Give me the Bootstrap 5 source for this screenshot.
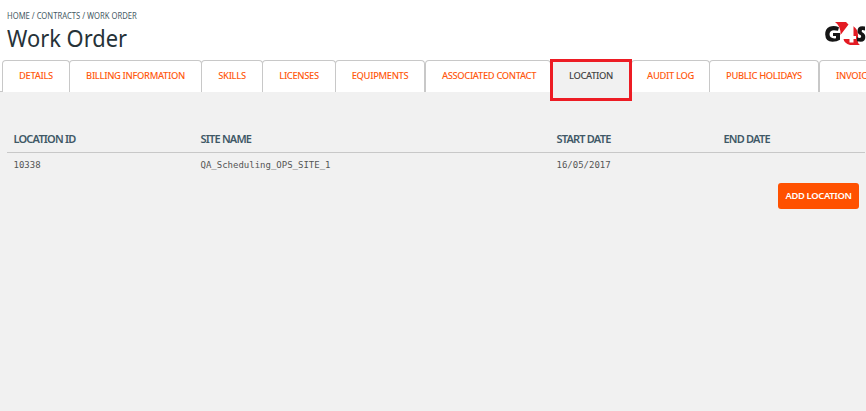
<!DOCTYPE html>
<html lang="en">
<head>
<meta charset="utf-8">
<title>Work Order</title>
<link href="https://cdn.jsdelivr.net/npm/bootstrap@5.3.0/dist/css/bootstrap.min.css" rel="stylesheet">
<style>
body{font-family:"Noto Sans","Open Sans",sans-serif;background:#f1f1f1;height:411px;overflow:hidden;color:#444}
.page-head{height:60px;padding:10px 0 0 7px}
.trail{font-size:8.8px;line-height:13px;color:#455a64;white-space:pre}
.trail span{display:inline-block;transform-origin:0 50%;transform:scaleX(.87)}
.page-title{font-size:24px;line-height:30px;color:#263238;font-weight:400;transform-origin:0 50%;transform:scaleX(.912)}
.logo{width:42px;height:26px;margin:11px 0 0 0}
.tabs{height:32px;padding-left:2px;--bs-nav-tabs-border-width:0px;border:0;background:#fff linear-gradient(#c8c8c8,#c8c8c8) 0 31px/2px 1px no-repeat}
.tabs .nav-item{flex:none;margin-right:-1px}
.tabs .nav-link{margin:0;height:32px;padding:0;border:1px solid #c8c8c8;border-bottom:0;border-radius:4px 4px 0 0;background:#fff;color:#ff5a0f;font-size:9.4px;font-weight:500;letter-spacing:-.35px;line-height:30px;text-align:center;white-space:nowrap;width:100%}
.tabs .nav-link.active{height:42px;margin-top:-1px;border:3px solid #ed1c24;border-radius:0;background:#f1f1f1;color:#444;line-height:28px;position:relative;z-index:2}
.w-a{width:68px}.w-b{width:133px}.w-c{width:62px}.w-d{width:74px}.w-e{width:90px}.w-f{width:126px}.w-g{width:82px}.w-h{width:79px}.w-i{width:110px}.w-j{width:86px}
.tabs .w-f .nav-link{padding-left:2px}
.tabs .gap-fix{margin-right:0}
.tabs .nav-link.cut{text-align:left;padding-left:16px}
.records{margin:36px 1px 0 7px;width:858px;table-layout:fixed;--bs-table-bg:transparent}
.records th{font-size:11px;line-height:16px;font-weight:600;letter-spacing:-.8px;color:#3f5866;padding:3px 0 5px 6.5px;border-bottom:1px solid #c8c8c8}
.records td{font-family:"DejaVu Sans Mono","Liberation Mono",monospace;font-size:9px;line-height:14px;color:#555;padding:5px 0 5px 6.5px;border:0}
.c1{width:187px}.c2{width:356px}.c3{width:167px}
.add{width:81px;height:26px;padding:0;margin:6px 7px 0 0;border:0;border-radius:3px;background:#ff5100;color:#fff;font-size:9.4px;font-weight:600;letter-spacing:-.32px;line-height:26px}
</style>
<script src="https://cdn.jsdelivr.net/npm/bootstrap@5.3.0/dist/js/bootstrap.bundle.min.js"></script>
</head>
<body>
<header class="page-head bg-white d-flex justify-content-between">
  <div>
    <div class="trail"><span>HOME / CONTRACTS / WORK ORDER</span></div>
    <h1 class="page-title m-0">Work Order</h1>
  </div>
  <svg class="logo" viewBox="0 0 42 26" aria-label="G4S">
    <path d="M11 1H22L24.5 3.5L16.5 14Q17 5 11 1Z" fill="#e31b23"/>
    <path d="M29 5Q34 8 34 14V18Q33 22 36 24H26Q20 22 19.5 18H29Z" fill="#e31b23"/>
    <path d="M15 6.2Q10 4 5.5 5.8Q1 8 1.2 13.5Q1.5 20.8 8.5 20.8Q13 20.8 16 18.8V12H9V15H12V17.3Q5.5 18 5.5 13Q6 7.6 14 9.8Z" fill="#151515"/>
    <path d="M29.5 4H26L16.5 14.5V18H25.5V21.5H29.5V18H32V15H29.5ZM25.5 9.5V15H20.5Z" fill="#fff"/>
    <path d="M41 5.5Q33.5 4 33.5 10Q33.5 13 36.5 14Q38 15 36.5 16.8Q35.5 17.3 33 16.3V20.2Q41.5 22.2 41.3 16Q41.3 12.5 38.5 11.5Q37 10.5 38 9Q39 8.6 41 9.5Z" fill="#151515"/>
  </svg>
</header>
<ul class="nav nav-tabs tabs flex-nowrap">
  <li class="nav-item w-a"><a class="nav-link" href="#">DETAILS</a></li>
  <li class="nav-item w-b"><a class="nav-link" href="#">BILLING INFORMATION</a></li>
  <li class="nav-item w-c"><a class="nav-link" href="#">SKILLS</a></li>
  <li class="nav-item w-d"><a class="nav-link" href="#">LICENSES</a></li>
  <li class="nav-item w-e gap-fix"><a class="nav-link" href="#">EQUIPMENTS</a></li>
  <li class="nav-item w-f"><a class="nav-link" href="#">ASSOCIATED CONTACT</a></li>
  <li class="nav-item w-g"><a class="nav-link active" href="#">LOCATION</a></li>
  <li class="nav-item w-h"><a class="nav-link" href="#">AUDIT LOG</a></li>
  <li class="nav-item w-i gap-fix"><a class="nav-link" href="#">PUBLIC HOLIDAYS</a></li>
  <li class="nav-item w-j"><a class="nav-link cut" href="#">INVOICING</a></li>
</ul>
<main>
  <table class="table records mb-0">
    <thead><tr><th class="c1">LOCATION ID</th><th class="c2">SITE NAME</th><th class="c3">START DATE</th><th>END DATE</th></tr></thead>
    <tbody><tr><td>10338</td><td>QA_Scheduling_OPS_SITE_1</td><td>16/05/2017</td><td></td></tr></tbody>
  </table>
  <div class="d-flex justify-content-end"><button class="btn add" type="button">ADD LOCATION</button></div>
</main>
</body>
</html>
